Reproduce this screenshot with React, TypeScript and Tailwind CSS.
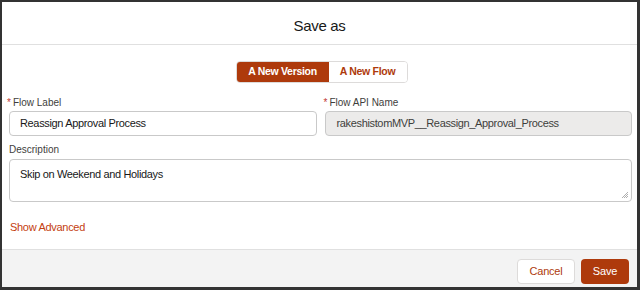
import React from "react";

export default function App() {
  return (
    <div
      className="w-[640px] h-[290px] bg-white border-l-2 border-t-2 border-r-[3px] border-b-[3px] border-[#333333] flex flex-col text-[#181818]"
      style={{ fontFamily: '"Liberation Sans", Arial, sans-serif' }}
    >
      {/* header */}
      <div className="h-[43px] shrink-0 flex items-center justify-center border-b border-[#e0e0e0]">
        <h2 className="text-[15px] tracking-[-0.3px] leading-none pt-[4px]">Save as</h2>
      </div>

      {/* body */}
      <div className="flex-1 pl-[7px] pr-[5px] pt-[16px]">
        <div className="flex justify-center">
          <div className="flex h-[22px] rounded border border-[#dddbda] text-[10.5px] font-bold tracking-[-0.3px] ml-[2px]">
            <button className="w-[92px] bg-[#ae3a0c] text-white rounded-l-[3px]">A New Version</button>
            <button className="w-[78px] bg-white text-[#ae3a0c] rounded-r-[3px]">A New Flow</button>
          </div>
        </div>

        <div className="grid grid-cols-2 gap-x-[8px] mt-[13px]">
          <div>
            <label className="block text-[10px] text-[#3e3e3c] -ml-[2px] leading-[14px]">
              <span className="text-[#c23934] mr-[2px]">*</span>Flow Label
            </label>
            <div className="mt-[1px] h-[25px] rounded border border-[#c9c9c9] flex items-center px-[10px] text-[11px] tracking-[-0.35px]">
              Reassign Approval Process
            </div>
          </div>
          <div>
            <label className="block text-[10px] text-[#3e3e3c] -ml-[1px] leading-[14px]">
              <span className="text-[#c23934] mr-[2px]">*</span>Flow API Name
            </label>
            <div className="mt-[1px] h-[25px] rounded border border-[#c9c9c9] bg-[#ecebea] flex items-center px-[11px] text-[11px] tracking-[-0.35px] text-[#3e3e3c]">
              rakeshistomMVP__Reassign_Approval_Process
            </div>
          </div>
        </div>

        <div className="mt-[7px]">
          <label className="block text-[10px] text-[#3e3e3c] leading-[14px]">Description</label>
          <div className="mt-[2px] h-[43px] rounded border border-[#c9c9c9] relative px-[10px] pt-[6px] text-[11px] tracking-[-0.35px]">
            Skip on Weekend and Holidays
            <svg className="absolute right-[2px] bottom-[2px]" width="8" height="8" viewBox="0 0 8 8">
              <path d="M7 1L1 7M7 3L3 7M7 5L5 7" stroke="#9a9a9a" strokeWidth="0.8" />
            </svg>
          </div>
        </div>

        <div className="mt-[18px] pl-[1px] text-[11px] tracking-[-0.3px] leading-[14px] text-[#c4400f]">Show Advanced</div>
      </div>

      {/* footer */}
      <div className="h-[38px] shrink-0 bg-[#f3f3f3] border-t border-[#e0e0e0] flex items-start justify-end gap-[6px] pr-[8px] pt-[9px]">
        <button className="h-[25px] w-[58px] rounded border border-[#dddbda] bg-white text-[11px] tracking-[-0.2px] text-[#ae3a0c]">Cancel</button>
        <button className="h-[25px] w-[48px] rounded bg-[#ae3a0c] text-[11px] tracking-[-0.2px] text-white">Save</button>
      </div>
    </div>
  );
}
